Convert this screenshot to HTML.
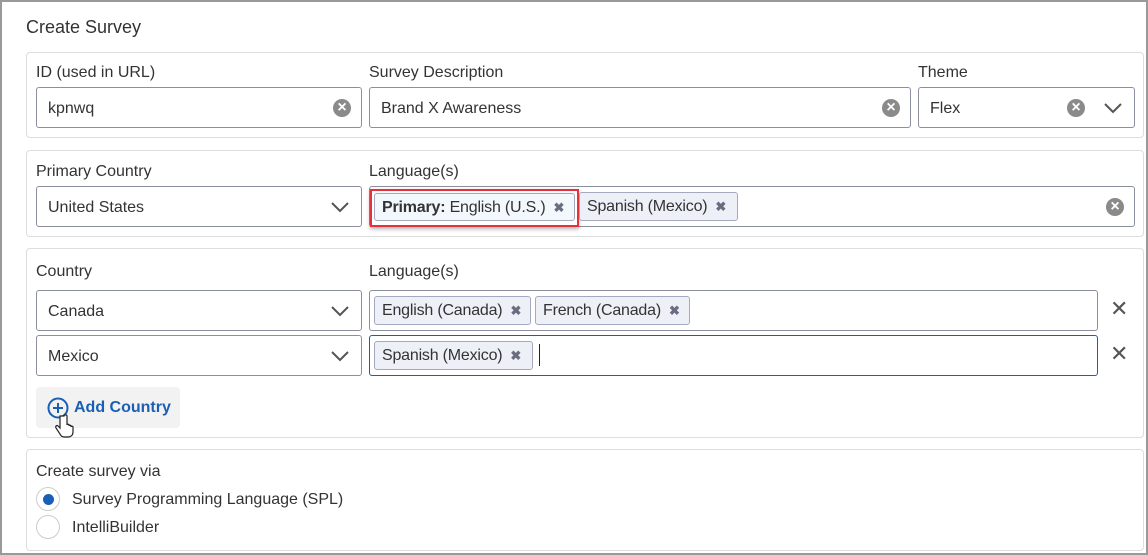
<!DOCTYPE html><html><head><style>
*{box-sizing:border-box}
body{margin:0;width:1148px;height:555px;overflow:hidden;background:#fff;font-family:"Liberation Sans",sans-serif;color:#333;font-size:16px}
.frame{position:absolute;left:0;top:0;width:1148px;height:555px;border:2px solid #999}
.a{position:absolute}
.panel{position:absolute;left:26px;width:1118px;border:1px solid #ddd;border-radius:4px}
.lbl{position:absolute;font-size:16px;color:#333;line-height:18px}
.inp{position:absolute;height:41px;border:1px solid #8c8f9e;border-radius:3px;background:#fff;line-height:41px;padding-left:11px;font-size:16px;color:#333}
.clr{position:absolute;top:11px;width:18px;height:18px;border-radius:50%;background:#8a8a8a;color:#fff;font-size:16px;line-height:18px;text-align:center;font-weight:bold}
.chev{position:absolute;top:10px;width:20px;height:20px}
.chip{position:absolute;top:5px;height:29px;border:1px solid #a5a9c0;border-radius:3px;background:#eef0f8;line-height:28px;padding:0 7px;font-size:16px;color:#333;white-space:nowrap;letter-spacing:-0.2px}
.chip b{font-weight:bold}
.chip i{font-style:normal;color:#6a6d80;font-weight:bold;margin-left:8px;font-size:13px}
.xx{position:absolute;color:#555;font-size:22px;line-height:22px}
</style></head><body>
<div class="frame"></div>
<div class="a" style="left:26px;top:17px;font-size:18px;color:#333">Create Survey</div>

<div class="panel" style="top:52px;height:86px"></div>
<div class="lbl" style="left:36px;top:64px">ID (used in URL)</div>
<div class="lbl" style="left:369px;top:64px">Survey Description</div>
<div class="lbl" style="left:918px;top:64px">Theme</div>
<div class="inp" style="left:36px;top:87px;width:326px">kpnwq<span class="clr" style="left:296px">×</span></div>
<div class="inp" style="left:369px;top:87px;width:542px">Brand X Awareness<span class="clr" style="left:512px">×</span></div>
<div class="inp" style="left:918px;top:87px;width:217px">Flex<span class="clr" style="left:148px">×</span><svg class="chev" style="left:184px" viewBox="0 0 20 20"><path d="M2 6l8 8 8-8" fill="none" stroke="#555" stroke-width="2"/></svg></div>

<div class="panel" style="top:150px;height:87px"></div>
<div class="lbl" style="left:36px;top:163px">Primary Country</div>
<div class="lbl" style="left:369px;top:163px">Language(s)</div>
<div class="inp" style="left:36px;top:186px;width:326px">United States<svg class="chev" style="left:293px" viewBox="0 0 20 20"><path d="M2 6l8 8 8-8" fill="none" stroke="#555" stroke-width="2"/></svg></div>
<div class="inp" style="left:369px;top:186px;width:766px"><span class="clr" style="left:736px">×</span></div>
<div class="a" style="left:370px;top:189px;width:209px;height:38px;border:2px solid #e8303a;box-shadow:0 2px 4px rgba(0,0,0,.3)"></div>
<div class="chip" style="left:374px;top:193px;height:28px;background:#f3f8fc;width:201px"><b>Primary:</b> English (U.S.)<i>✖</i></div>
<div class="chip" style="left:579px;top:192px;height:29px;width:159px">Spanish (Mexico)<i>✖</i></div>

<div class="panel" style="top:248px;height:190px"></div>
<div class="lbl" style="left:36px;top:263px">Country</div>
<div class="lbl" style="left:369px;top:263px">Language(s)</div>
<div class="inp" style="left:36px;top:290px;width:326px">Canada<svg class="chev" style="left:293px" viewBox="0 0 20 20"><path d="M2 6l8 8 8-8" fill="none" stroke="#555" stroke-width="2"/></svg></div>
<div class="inp" style="left:369px;top:290px;width:729px"></div>
<div class="chip" style="left:374px;top:296px;width:157px">English (Canada)<i>✖</i></div>
<div class="chip" style="left:535px;top:296px;width:155px">French (Canada)<i>✖</i></div>
<div class="xx" style="left:1110px;top:298px">✕</div>
<div class="inp" style="left:36px;top:335px;width:326px">Mexico<svg class="chev" style="left:293px" viewBox="0 0 20 20"><path d="M2 6l8 8 8-8" fill="none" stroke="#555" stroke-width="2"/></svg></div>
<div class="inp" style="left:369px;top:335px;width:729px;border-color:#1a5fb4"></div>
<div class="chip" style="left:374px;top:341px;width:159px">Spanish (Mexico)<i>✖</i></div>
<div class="a" style="left:539px;top:344px;width:1px;height:22px;background:#222"></div>
<div class="xx" style="left:1110px;top:343px">✕</div>
<div class="a" style="left:36px;top:387px;width:144px;height:41px;background:#f2f2f2;border-radius:4px"></div>
<svg class="a" style="left:47px;top:397px" width="22" height="22" viewBox="0 0 22 22"><circle cx="11" cy="11" r="9.5" fill="none" stroke="#1a5fb4" stroke-width="2"/><path d="M11 6v10M6 11h10" stroke="#1a5fb4" stroke-width="2"/></svg>
<div class="a" style="left:74px;top:399px;color:#1a5fb4;font-weight:bold;font-size:16px">Add Country</div>
<svg class="a" style="left:55px;top:414px" width="20" height="24" viewBox="0 0 20 24"><path d="M5 2v12l-2-2c-1-1-3 0-2 2l4 6c1 2 2 3 5 3h3c3 0 5-2 5-5v-5c0-1-2-1-2 0v-1c0-1-2-1-2 0v-1c0-1-2-1-2 0V2c0-1.5-3-1.5-3 0z" fill="#fff" stroke="#222" stroke-width="1.2"/></svg>

<div class="panel" style="top:449px;height:102px"></div>
<div class="lbl" style="left:36px;top:463px">Create survey via</div>
<div class="a" style="left:36px;top:487px;width:24px;height:24px;border:1px solid #ccc;border-radius:50%"><div class="a" style="left:6px;top:6px;width:11px;height:11px;border-radius:50%;background:#1a5fb4"></div></div>
<div class="lbl" style="left:72px;top:491px">Survey Programming Language (SPL)</div>
<div class="a" style="left:36px;top:515px;width:24px;height:24px;border:1px solid #ccc;border-radius:50%"></div>
<div class="lbl" style="left:72px;top:519px">IntelliBuilder</div>
</body></html>
